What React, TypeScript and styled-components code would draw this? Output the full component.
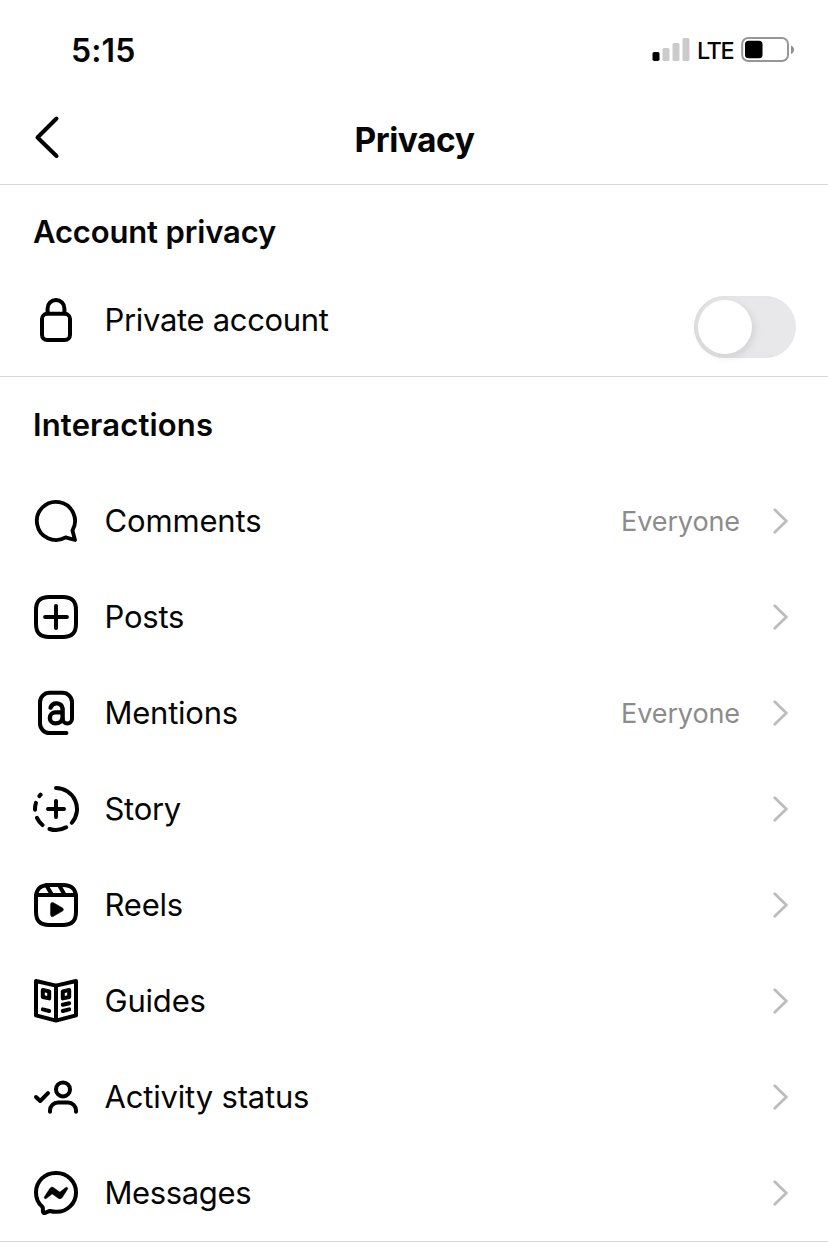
import React from "react";
import styled, { createGlobalStyle } from "styled-components";

const GlobalStyle = createGlobalStyle`
  * { box-sizing: border-box; }
  body { margin: 0; background: #fff; }
`;

const Screen = styled.div`
  width: 828px;
  height: 1255px;
  overflow: hidden;
  background: #fff;
  color: #060606;
  font-family: Inter, "Liberation Sans", sans-serif;
  display: flex;
  flex-direction: column;
`;

const StatusBar = styled.header`
  height: 92px;
  display: flex;
  align-items: center;
  justify-content: space-between;
  padding: 8px 33px 0 71px;
`;

const Clock = styled.span`
  padding-top: 2px;
  font-size: 32px;
  line-height: 40px;
  font-weight: 600;
  letter-spacing: 0.1px;
`;

const StatusIcons = styled.div`
  display: flex;
  align-items: center;
  svg { display: block; }
`;

const Network = styled.span`
  width: 51px;
  padding: 2px 0 0 7px;
  font-size: 23.5px;
  line-height: 28px;
  font-weight: 500;
  letter-spacing: -1.5px;
  white-space: nowrap;
`;

const NavBar = styled.nav`
  height: 93px;
  display: grid;
  grid-template-columns: 80px 1fr 80px;
  align-items: center;
  border-bottom: 1px solid #d8d8d8;
`;

const BackButton = styled.button`
  border: 0;
  padding: 0 0 2px 32px;
  background: none;
  color: inherit;
  svg { display: block; }
`;

const Title = styled.h1`
  margin: 0;
  padding: 3px 0 0 1px;
  text-align: center;
  font-size: 33.5px;
  line-height: 44px;
  font-weight: 700;
  letter-spacing: -0.45px;
`;

const Section = styled.section<{ $height: number }>`
  height: ${(p) => p.$height}px;
  border-bottom: 1px solid #d8d8d8;
`;

const SectionTitle = styled.h2<{ $height: number; $spacing: number; $top: number }>`
  margin: 0;
  height: ${(p) => p.$height}px;
  padding: ${(p) => p.$top}px 33px 0;
  font-size: 31px;
  line-height: 40px;
  font-weight: 600;
  letter-spacing: ${(p) => p.$spacing}px;
`;

const Row = styled.div`
  height: 96px;
  padding: 0 32px;
  display: flex;
  align-items: center;
`;

const IconSvg = styled.svg`
  width: 48px;
  height: 48px;
  flex: none;
  margin-right: 24.5px;
  fill: none;
  stroke: #000;
  stroke-width: 2;
  stroke-linecap: round;
  stroke-linejoin: round;
`;

const Label = styled.span<{ $spacing?: number }>`
  flex: 1;
  font-size: 31px;
  line-height: 40px;
  padding-bottom: 1px;
  letter-spacing: ${(p) => p.$spacing ?? 0}px;
`;

const Value = styled.span`
  margin-right: 30px;
  padding-top: 2px;
  font-size: 27px;
  line-height: 36px;
  letter-spacing: -0.1px;
  color: #8c8c8c;
`;

const ChevronSvg = styled.svg`
  width: 18px;
  height: 28px;
  margin-right: 8px;
  fill: none;
  stroke: #bdbdbd;
  stroke-width: 2.8;
`;

const Toggle = styled.button`
  width: 102px;
  height: 62px;
  margin-top: 14px;
  padding: 4px;
  border: 0;
  border-radius: 31px;
  background: #e8e8ea;
  box-shadow: inset 3px 0 4px -1px #d9d9da;
`;

const Knob = styled.span`
  display: block;
  width: 54px;
  height: 54px;
  border-radius: 50%;
  background: #fff;
  box-shadow: 2px 3px 8px rgba(0, 0, 0, 0.1);
`;

const FRAME =
  "M2 12v3.45c0 2.849.698 4.005 1.606 4.944.94.909 2.098 1.608 4.946 1.608h6.896c2.848 0 4.006-.7 4.946-1.608C21.302 19.455 22 18.3 22 15.45V8.552c0-2.849-.698-4.006-1.606-4.945C19.454 2.7 18.296 2 15.448 2H8.552c-2.848 0-4.006.699-4.946 1.607C2.698 4.547 2 5.703 2 8.552Z";

const arc = (from: number, to: number, r = 10.5) => {
  const pt = (deg: number) => {
    const a = (deg * Math.PI) / 180;
    return `${(12 + r * Math.cos(a)).toFixed(2)} ${(12 + r * Math.sin(a)).toFixed(2)}`;
  };
  return `M${pt(from)}A${r} ${r} 0 0 1 ${pt(to)}`;
};

const icons = {
  lock: (
    <>
      <rect x="5" y="8.9" width="14" height="13.1" rx="2.6" />
      <path d="M7.8 8.6V6.2a4.2 4.2 0 0 1 8.4 0v2.4" />
    </>
  ),
  comment: (
    <path
      transform="translate(.5 .5) scale(.955)"
      d="M20.656 17.008a9.993 9.993 0 1 0-3.59 3.615L22 22Z"
    />
  ),
  post: (
    <>
      <path d={FRAME} />
      <path d="M6.545 12.001h10.91M12.003 6.545v10.91" />
    </>
  ),
  mention: (
    <>
      <path d="M17.2 22H8.7A4.7 4.7 0 0 1 4 17.3V6.6a4.7 4.7 0 0 1 4.7-4.7h6.6A4.7 4.7 0 0 1 20 6.6v8.3a2.35 2.35 0 0 1-4.7 0" />
      <path
        strokeWidth="2.2"
        d="M15.3 15V9.8a3.1 3.1 0 0 0-6-.5M15.3 11.7h-3.600a2.75 2.75 0 0 0 0 5.500c2.100 0 3.600-1.200 3.600-3.200"
      />
    </>
  ),
  story: (
    <>
      <path
        d={[arc(-90, 41), arc(61, 108), arc(130, 155), arc(178, 197), arc(218, 223)].join("")}
      />
      <path d="M8 12h8M12 8v8" />
    </>
  ),
  reels: (
    <>
      <path d={FRAME} />
      <path d="M2.05 7.002h19.9M13.504 2.001l2.858 5.001M7.207 2.11l2.795 4.892" />
      <path
        d="M9.763 17.664a.908.908 0 0 1-.454-.787V11.63a.909.909 0 0 1 1.364-.788l4.545 2.624a.909.909 0 0 1 0 1.575l-4.545 2.624a.91.91 0 0 1-.91 0Z"
        fill="#000"
        strokeWidth="0.3"
      />
    </>
  ),
  guides: (
    <>
      <path d="M12 4.3 2 2v17.2l10 2.6 10-2.6V2ZM12 4.3v17.5" />
      <path d="m5.400 6.500 3.200.7v3.500l-3.200-.7ZM18.600 6.500l-3.200.7v3.500l3.200-.7ZM5.400 16.200l3.200.8M18.600 13.100l-3.200.8M18.600 16.200l-3.200.8" />
    </>
  ),
  activity: (
    <>
      <circle cx="15.5" cy="8.2" r="3.5" />
      <path d="M9 19.4v-.6a4 4 0 0 1 4-4h5a4 4 0 0 1 4 4v.6M2 12l2.1 2L8 10.1" />
    </>
  ),
  messenger: (
    <>
      <path
        d="M12.003 2.001a9.705 9.705 0 1 1 0 19.4 10.876 10.876 0 0 1-2.895-.384.798.798 0 0 0-.533.04l-1.984.876a.801.801 0 0 1-1.123-.708l-.054-1.78a.806.806 0 0 0-.27-.569 9.49 9.49 0 0 1-3.14-7.175 9.65 9.65 0 0 1 10-9.7Z"
      />
      <path
        d="M17.79 10.132a.659.659 0 0 0-.962-.873l-2.556 2.05a.63.63 0 0 1-.758.002L11.06 9.47a1.576 1.576 0 0 0-2.277.42l-2.567 3.98a.659.659 0 0 0 .961.875l2.556-2.049a.63.63 0 0 1 .759-.002l2.452 1.84a1.576 1.576 0 0 0 2.278-.42Z"
        fill="#000"
        strokeWidth="0.2"
      />
    </>
  ),
};

type IconName = keyof typeof icons;

const Icon = ({ name }: { name: IconName }) => (
  <IconSvg viewBox="0 0 24 24">{icons[name]}</IconSvg>
);

const Chevron = () => (
  <ChevronSvg viewBox="0 0 18 28">
    <path d="M4 2l12.3 12L4 26" />
  </ChevronSvg>
);

const Signal = () => (
  <svg width="38" height="24" viewBox="0 0 38 24">
    <rect x="0.5" y="14" width="7" height="9" rx="1.8" fill="#000" />
    <g fill="#cbcbcb">
      <rect x="10.5" y="10" width="7" height="13" rx="1.5" />
      <rect x="20.5" y="5" width="7" height="18" rx="1.5" />
      <rect x="30.5" y="0" width="7" height="23" rx="1.5" />
    </g>
  </svg>
);

const Battery = () => (
  <svg width="54" height="26" viewBox="0 0 54 26">
    <rect x="1.2" y="1" width="45.8" height="23" rx="6" fill="none" stroke="#979797" strokeWidth="2" />
    <rect x="4" y="3.8" width="17.5" height="17.5" rx="3.5" fill="#000" />
    <path d="M50 8.500c4 1.200 4 7.300 0 8.500Z" fill="#8e8e8e" />
  </svg>
);

const interactions: { icon: IconName; label: string; spacing: number; value?: string }[] = [
  { icon: "comment", label: "Comments", spacing: -0.15, value: "Everyone" },
  { icon: "post", label: "Posts", spacing: -0.2 },
  { icon: "mention", label: "Mentions", spacing: -0.25, value: "Everyone" },
  { icon: "story", label: "Story", spacing: -0.3 },
  { icon: "reels", label: "Reels", spacing: -0.2 },
  { icon: "guides", label: "Guides", spacing: -0.2 },
  { icon: "activity", label: "Activity status", spacing: -0.18 },
  { icon: "messenger", label: "Messages", spacing: -0.38 },
];

export default function App() {
  return (
    <Screen>
      <GlobalStyle />
      <StatusBar>
        <Clock>5:15</Clock>
        <StatusIcons>
          <Signal />
          <Network>LTE</Network>
          <Battery />
        </StatusIcons>
      </StatusBar>
      <NavBar>
        <BackButton aria-label="Back">
          <svg width="30" height="44" viewBox="0 0 30 44" fill="none" stroke="#000" strokeWidth="4" strokeLinecap="round" strokeLinejoin="round">
            <path d="M24.500 3.500 5.500 22.500l19 18.500" />
          </svg>
        </BackButton>
        <Title>Privacy</Title>
      </NavBar>
      <Section $height={192}>
        <SectionTitle $height={87} $top={27} $spacing={-0.15}>
          Account privacy
        </SectionTitle>
        <Row>
          <Icon name="lock" />
          <Label $spacing={-0.32}>Private account</Label>
          <Toggle role="switch" aria-checked={false} aria-label="Private account">
            <Knob />
          </Toggle>
        </Row>
      </Section>
      <Section $height={865}>
        <SectionTitle $height={96} $top={28} $spacing={0.15}>
          Interactions
        </SectionTitle>
        {interactions.map((item) => (
          <Row key={item.label}>
            <Icon name={item.icon} />
            <Label $spacing={item.spacing}>{item.label}</Label>
            {item.value && <Value>{item.value}</Value>}
            <Chevron />
          </Row>
        ))}
      </Section>
    </Screen>
  );
}
